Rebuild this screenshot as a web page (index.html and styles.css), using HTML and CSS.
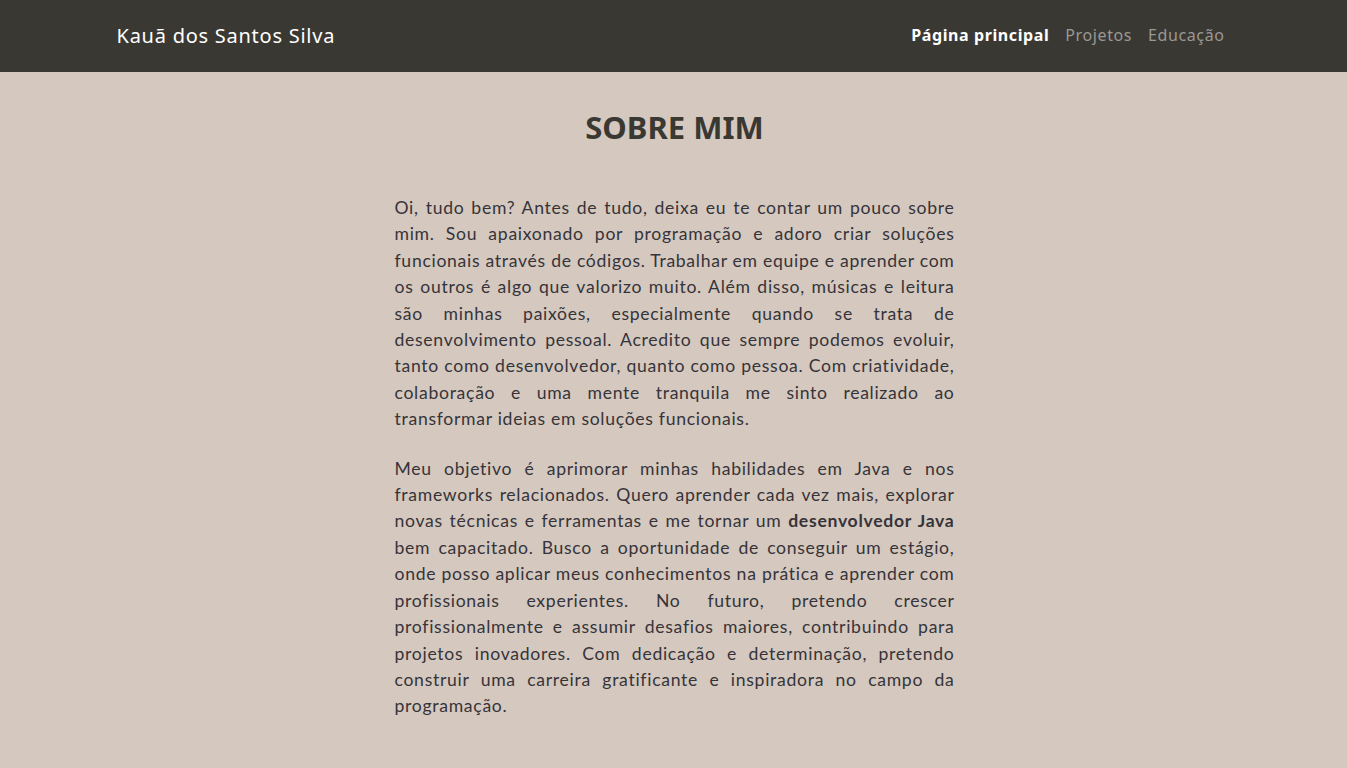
FILE: index.html
```html
<!DOCTYPE html>
<html lang="pt-BR">
<head>
<meta charset="utf-8">
<title>Kauã dos Santos Silva</title>
<link rel="stylesheet" href="styles.css">
</head>
<body>
<header class="topbar">
  <div class="container bar-inner">
    <a class="brand" href="#">Kauã dos Santos Silva</a>
    <nav class="nav">
      <a class="nav-link active" href="#">Página principal</a>
      <a class="nav-link" href="#">Projetos</a>
      <a class="nav-link" href="#">Educação</a>
    </nav>
  </div>
</header>
<main class="about">
  <h1 class="title">SOBRE MIM</h1>
  <div class="text">
    <p>Oi, tudo bem? Antes de tudo, deixa eu te contar um pouco sobre mim. Sou apaixonado por programação e adoro criar soluções funcionais através de códigos. Trabalhar em equipe e aprender com os outros é algo que valorizo muito. Além disso, músicas e leitura são minhas paixões, especialmente quando se trata de desenvolvimento pessoal. Acredito que sempre podemos evoluir, tanto como desenvolvedor, quanto como pessoa. Com criatividade, colaboração e uma mente tranquila me sinto realizado ao transformar ideias em soluções funcionais.</p>
    <p>Meu objetivo é aprimorar minhas habilidades em Java e nos frameworks relacionados. Quero aprender cada vez mais, explorar novas técnicas e ferramentas e me tornar um <strong>desenvolvedor Java</strong> bem capacitado. Busco a oportunidade de conseguir um estágio, onde posso aplicar meus conhecimentos na prática e aprender com profissionais experientes. No futuro, pretendo crescer profissionalmente e assumir desafios maiores, contribuindo para projetos inovadores. Com dedicação e determinação, pretendo construir uma carreira gratificante e inspiradora no campo da programação.</p>
  </div>
</main>
</body>
</html>
```

FILE: styles.css
```css
* { box-sizing: border-box; }
html, body { margin: 0; padding: 0; }
body {
  background: #d5c8be;
  color: #35343a;
  font-family: "Lato", "Open Sans", sans-serif;
  min-height: 768px;
}
.container {
  width: 1140px;
  margin: 0 auto;
  padding: 0 15px;
}
.topbar {
  background: #3a3833;
  height: 72px;
}
.bar-inner {
  height: 72px;
  display: flex;
  align-items: center;
  justify-content: space-between;
  padding-left: 13px;
  padding-right: 19px;
}
.brand {
  color: #ffffff;
  text-decoration: none;
  font-family: "Noto Sans", "DejaVu Sans", sans-serif;
  font-size: 20px;
  letter-spacing: 0.75px;
  margin-top: -2px;
}
.nav {
  display: flex;
  align-items: center;
  margin-right: -8px;
  margin-top: -2px;
}
.nav-link {
  padding: 0 8px;
  color: #9a9894;
  text-decoration: none;
  font-family: "Noto Sans", "DejaVu Sans", sans-serif;
  font-size: 16px;
  letter-spacing: 0.6px;
}
.nav-link.active {
  color: #ffffff;
  font-weight: 700;
}
.about {
  display: flex;
  flex-direction: column;
  align-items: center;
  padding-top: 35px;
}
.title {
  margin: 0;
  font-family: "Noto Sans", sans-serif;
  font-size: 31px;
  font-weight: 700;
  color: #3a3833;
  line-height: 40px;
  padding-left: 2px;
}
.text {
  width: 560px;
  margin-top: 48px;
  margin-left: 2px;
}
.text p {
  margin: 0 0 23px;
  font-size: 17.6px;
  line-height: 26.4px;
  letter-spacing: 0.7px;
  text-align: justify;
  color: #35343a;
}
.text strong { font-weight: 700; }
```
